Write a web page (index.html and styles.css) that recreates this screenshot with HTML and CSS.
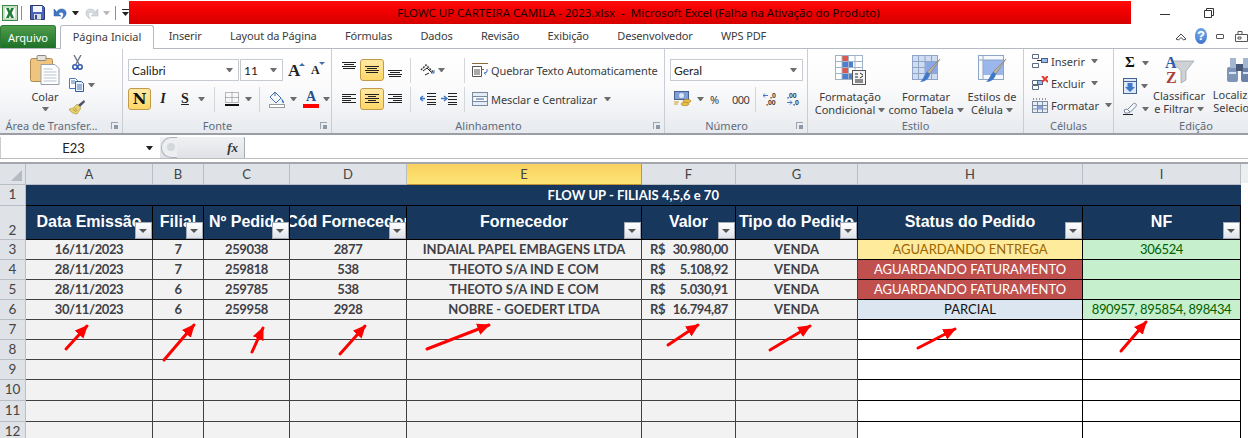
FILE: index.html
```html
<!DOCTYPE html>
<html lang="pt-BR">
<head>
<meta charset="utf-8">
<title>FLOWC UP CARTEIRA CAMILA - 2023.xlsx - Microsoft Excel</title>
<link rel="stylesheet" href="styles.css">
</head>
<body>
<div class="app">
  <header class="titlebar">
    <div class="qat">
      <svg class="q-excel" width="16" height="16" viewBox="0 0 16 16"><rect x=".5" y=".5" width="15" height="15" fill="#e8f3e4" stroke="#3d8a45"/><rect x="2" y="2" width="12" height="12" fill="#fff" stroke="#9cc79e"/><path d="M4 3h3l1 3 1-3h3L9.600 8 12 13H9L8 10l-1 3H4l2.400-5z" fill="#1f7a35"/></svg>
      <i class="q-sep"></i>
      <svg class="q-save" width="15" height="15" viewBox="0 0 15 15"><path d="M.5.500h12l2 2v12H.5z" fill="#4a63b8" stroke="#27386f"/><rect x="3" y="1" width="9" height="6" fill="#f2f5fb"/><rect x="4" y="9" width="7" height="5.500" fill="#d6dcea"/><rect x="5" y="10" width="2" height="4" fill="#35477f"/></svg>
      <svg class="q-undo" width="15" height="15" viewBox="0 0 15 15"><path d="M3 8.500C4 3 12 2.500 13 7c.6 3-1.500 5.500-4.500 7 2-2.500 2.500-4.500 1.500-6C9 6.500 6.500 7 5.500 9L8 11H1V4l2 2z" fill="#3f78c8" stroke="#2c5a9e" stroke-width=".5"/></svg>
      <i class="dd dd-black q-dd1"></i>
      <svg class="q-redo" width="15" height="15" viewBox="0 0 15 15"><path d="M12 8.500C11 3 3 2.500 2 7c-.6 3 1.500 5.500 4.500 7-2-2.500-2.500-4.500-1.500-6 1-1.500 3.500-1 4.500 1L7 11h7V4l-2 2z" fill="#d5dbe0" stroke="#aeb6bc" stroke-width=".5"/></svg>
      <i class="dd dd-pale q-dd2"></i>
      <i class="q-sep q-sep2"></i>
      <svg class="q-custom" width="7" height="8" viewBox="0 0 7 8"><path d="M0 .5h7" stroke="#222"/><path d="M0 3h7L3.500 7z" fill="#222"/></svg>
    </div>
    <div class="banner">FLOWC UP CARTEIRA CAMILA - 2023.xlsx &nbsp;-&nbsp; Microsoft Excel (Falha na Ativação do Produto)</div>
    <div class="winctl">
      <i class="win-min"></i>
      <svg class="win-restore" width="10" height="10" viewBox="0 0 10 10"><path d="M2.500 2.500V.5h7v7h-2M.5 2.500h7v7h-7z" fill="none" stroke="#333"/></svg>
    </div>
  </header>

  <nav class="tabs">
    <span class="tab-file">Arquivo</span>
    <span class="tab-active">Página Inicial</span>
    <span class="tab">Inserir</span>
    <span class="tab">Layout da Página</span>
    <span class="tab">Fórmulas</span>
    <span class="tab">Dados</span>
    <span class="tab">Revisão</span>
    <span class="tab">Exibição</span>
    <span class="tab">Desenvolvedor</span>
    <span class="tab">WPS PDF</span>
    <div class="tab-tools">
      <svg width="12" height="9" viewBox="0 0 12 9"><path d="M1 7l5-5 5 5-2.500 1L6 5.500 3.500 8z" fill="#fff" stroke="#444"/></svg>
      <span class="help">?</span>
      <i class="mini-min"></i>
      <svg class="mini-lock" width="13" height="12" viewBox="0 0 13 12"><path d="M3 4V1.500h4V4M.5 4.500h12v7H.5zM3 7h3v2H3z" fill="none" stroke="#555"/></svg>
    </div>
  </nav>

  <section class="ribbon">
    <div class="group g-clip">
      <div class="g-body clip-body">
        <div class="big paste">
          <svg width="30" height="30" viewBox="0 0 30 30"><rect x=".5" y="3.500" width="22" height="23" rx="2" fill="#eec47f" stroke="#b38a4e"/><rect x="7" y=".5" width="9" height="5" rx="1" fill="#e6e3dc" stroke="#8b8a84"/><path d="M11 9.500h14l4 4v16H11z" fill="#fff" stroke="#96a0ae"/><path d="M13.500 14h9M13.500 17h13M13.500 20h13M13.500 23h13M13.500 26h13" stroke="#b9c3d0"/></svg>
          <span class="big-label">Colar</span>
          <i class="dd"></i>
        </div>
        <div class="clip-tools">
          <svg class="t-cut" width="11" height="15" viewBox="0 0 11 15"><path d="M2 0l5 9M9 0L4 9" stroke="#6b7686" stroke-width="1.400"/><circle cx="3" cy="12" r="2.200" fill="none" stroke="#2d55a8" stroke-width="1.500"/><circle cx="8" cy="12" r="2.200" fill="none" stroke="#2d55a8" stroke-width="1.500"/></svg>
          <div class="t-copy"><svg width="15" height="14" viewBox="0 0 15 14"><path d="M.5.500h6l2 2v8H.5z" fill="#fff" stroke="#4c7ab8"/><path d="M6.500 3.500h6l2 2v8h-8z" fill="#e8f0fb" stroke="#2f5ea3"/><path d="M8 7h5M8 9h5M8 11h5M2 3h4M2 5h4" stroke="#4c7ab8"/></svg><i class="dd"></i></div>
          <svg class="t-paint" width="16" height="15" viewBox="0 0 16 15"><path d="M15 0l1 2-5 5-2-2z" fill="#4d5361"/><path d="M8 4l4 4-4 6c-3 0-7-2-8-5 3 0 6-2 8-5z" fill="#e8cf6e" stroke="#a8923e" stroke-width=".6"/><path d="M4 9l3 3M6 8l2 3" stroke="#b59c45"/></svg>
        </div>
      </div>
      <div class="g-label lab-launch">Área de Transfer...<i class="launch"></i></div>
    </div>

    <div class="group g-font">
      <div class="g-body rows">
        <div class="row">
          <div class="combo c-font"><span>Calibri</span><i class="dd"></i></div>
          <div class="combo c-size"><span>11</span><i class="dd"></i></div>
          <span class="glyph-a grow">A<i class="up"></i></span>
          <span class="glyph-a shrink">A<i class="down"></i></span>
        </div>
        <div class="row">
          <span class="hot fbtn b-n">N</span>
          <span class="fchar fi">I</span>
          <span class="fchar fs">S</span>
          <i class="dd m7"></i>
          <i class="vsep m9"></i>
          <svg class="m10" width="14" height="14" viewBox="0 0 14 14"><path d="M.5.500h13v10H.5zM7 .5v10M.5 5.500h13" fill="none" stroke="#777" stroke-dasharray="1 1"/><path d="M0 13h14" stroke="#111" stroke-width="2"/></svg>
          <i class="dd m6"></i>
          <i class="vsep m7"></i>
          <svg class="m9" width="16" height="17" viewBox="0 0 16 17"><path d="M6 1l6 6-5 5-6-6z" fill="#f5f8fc" stroke="#3f6fae"/><path d="M12 7c2 2 3 3 3 4.500S13 12 13 10.500z" fill="#3f78c8"/><path d="M6 5V1" stroke="#3f6fae"/><rect x=".5" y="13.500" width="15" height="3" fill="#fff" stroke="#9a9a9a"/></svg>
          <i class="dd m5"></i>
          <span class="fcolor m6">A</span>
          <i class="dd m4"></i>
        </div>
      </div>
      <div class="g-label lab-launch">Fonte<i class="launch"></i></div>
    </div>

    <div class="group g-align">
      <div class="g-body rows">
        <div class="row">
          <svg class="al" width="14" height="22" viewBox="0 0 14 22"><path d="M0 3.500h14M2 5.500h10M0 7.500h14M1 9.500h12" stroke="#222"/></svg>
          <span class="hot abtn"><svg width="14" height="10" viewBox="0 0 14 10"><path d="M0 1.500h14M2 3.500h10M0 5.500h14M1 7.500h12" stroke="#222"/></svg></span>
          <svg class="al" width="14" height="22" viewBox="0 0 14 22"><path d="M0 11.500h14M2 13.500h10M0 15.500h14M1 17.500h12" stroke="#222"/></svg>
          <i class="vsep m8"></i>
          <svg class="m9" width="16" height="13" viewBox="0 0 16 13"><path d="M1 6l5-5 8 8" fill="none" stroke="#444" stroke-width="1.500" stroke-dasharray="2 1"/><path d="M3 7l4-3 5 5M5 11l4-2" fill="none" stroke="#222"/><path d="M11 9l3 0 0-3" fill="none" stroke="#3f78c8"/></svg>
          <i class="dd m2"></i>
          <i class="vsep m19"></i>
          <svg class="m7" width="16" height="14" viewBox="0 0 16 14"><path d="M0 .5h16M0 3.500h10M0 6.500h12" stroke="#8a6a3a"/><path d="M.5 3.500h9v10h-9zM2 7h6M2 9h6M2 11h6" fill="#fff" stroke="#555"/><path d="M12 10l3-1V6M12 10l2 1.500" fill="none" stroke="#3f78c8"/></svg>
          <span class="rtext m3">Quebrar Texto Automaticamente</span>
        </div>
        <div class="row">
          <svg class="al" width="14" height="22" viewBox="0 0 14 22"><path d="M0 6.500h14M0 8.500h9M0 10.500h14M0 12.500h9M0 14.500h14" stroke="#222"/></svg>
          <span class="hot abtn"><svg width="14" height="12" viewBox="0 0 14 12"><path d="M0 1.500h14M3 3.500h8M0 5.500h14M3 7.500h8M0 9.500h14" stroke="#222"/></svg></span>
          <svg class="al" width="14" height="22" viewBox="0 0 14 22"><path d="M0 6.500h14M5 8.500h9M0 10.500h14M5 12.500h9M0 14.500h14" stroke="#222"/></svg>
          <i class="vsep m8"></i>
          <svg class="m9" width="16" height="12" viewBox="0 0 16 12"><path d="M7 .5h9M7 3.500h9M7 6.500h9M7 9.500h9M7 11.500h9" stroke="#222"/><path d="M0 5.500h5M3 3l-3 2.500L3 8" fill="none" stroke="#3f78c8" stroke-width="1.400"/></svg>
          <svg class="m5" width="16" height="12" viewBox="0 0 16 12"><path d="M7 .5h9M7 3.500h9M7 6.500h9M7 9.500h9M7 11.500h9" stroke="#222"/><path d="M0 5.500h5M3 3l3 2.500L3 8" fill="none" stroke="#3f78c8" stroke-width="1.400"/></svg>
          <i class="vsep m7"></i>
          <svg class="m7" width="16" height="14" viewBox="0 0 16 14"><rect x=".5" y=".5" width="15" height="13" fill="#e4ecf7" stroke="#7a8aa0"/><path d="M.5 4.500h15M.5 9.500h15" stroke="#7a8aa0"/><rect x="2" y="5" width="12" height="4" fill="#fff"/><path d="M4 7h8" stroke="#2d55a8"/></svg>
          <span class="rtext m3">Mesclar e Centralizar</span>
          <i class="dd m7"></i>
        </div>
      </div>
      <div class="g-label lab-launch">Alinhamento<i class="launch"></i></div>
    </div>

    <div class="group g-num">
      <div class="g-body rows">
        <div class="row">
          <div class="combo c-num"><span>Geral</span><i class="dd"></i></div>
        </div>
        <div class="row">
          <svg class="m4" width="19" height="16" viewBox="0 0 19 16"><rect x=".5" y=".5" width="14" height="8" fill="#7f9fd6" stroke="#46638f"/><circle cx="7.500" cy="4.500" r="2.500" fill="#dbe6f7"/><ellipse cx="13" cy="10" rx="4" ry="1.700" fill="#eabf45" stroke="#a8832a" stroke-width=".6"/><ellipse cx="11" cy="13" rx="4" ry="1.700" fill="#eabf45" stroke="#a8832a" stroke-width=".6"/><path d="M0 11h5M0 13h4" stroke="#c9a02f"/></svg>
          <i class="dd m4"></i>
          <span class="ntext n-pct m6">%</span>
          <span class="ntext n-thou m13">000</span>
          <i class="vsep m7"></i>
          <svg class="m7" width="16" height="14" viewBox="0 0 16 14"><text class="dec" x="7" y="6">,0</text><text class="dec" x="3" y="13">,00</text><path d="M0 3.500h5M2 1.500l-2 2 2 2" fill="none" stroke="#3f78c8"/></svg>
          <svg class="m6" width="16" height="14" viewBox="0 0 16 14"><text class="dec" x="2" y="6">,00</text><text class="dec" x="8" y="13">,0</text><path d="M2 10.500h5M5 8.500l2 2-2 2" fill="none" stroke="#3f78c8"/></svg>
        </div>
      </div>
      <div class="g-label lab-launch">Número<i class="launch"></i></div>
    </div>

    <div class="group g-style">
      <div class="g-body style-body">
        <div class="big b-cond">
          <svg width="31" height="30" viewBox="0 0 31 30"><rect x=".5" y=".5" width="27" height="24" fill="#fff" stroke="#9fb2c8"/><rect x="7" y="1" width="6" height="6" fill="#e2574c"/><rect x="7" y="7" width="11" height="6" fill="#4c7fd0"/><rect x="7" y="13" width="6" height="6" fill="#e2574c"/><rect x="7" y="19" width="10" height="5" fill="#4c7fd0"/><path d="M7 .5v24M13.500 .5v24M20 .5v24M.5 6.500h27M.5 12.500h27M.5 18.500h27" stroke="#9fb2c8" fill="none"/><rect x="17.500" y="15.500" width="13" height="14" fill="#f4f4f4" stroke="#555"/><path d="M20 19h3M25 18l3 2M20 22h3M25 23l3-2M20 25h8M20 27h8" stroke="#222"/></svg>
          <span class="big-label l1">Formatação</span>
          <span class="big-label">Condicional<i class="dd m3 inl"></i></span>
        </div>
        <div class="big b-table">
          <svg width="29" height="30" viewBox="0 0 29 30"><rect x=".5" y=".5" width="25" height="24" fill="#cfdcf2" stroke="#8ea5c5"/><path d="M.5 6.500h25M.5 12.500h25M.5 18.500h25M6.500 .5v24M13 .5v24M19.500 .5v24" stroke="#8ea5c5"/><path d="M13 7h12v11H13z" fill="#8aa9e6"/><path d="M28 4L18 19l-3-2z" fill="#b9b2a4" stroke="#75705f" stroke-width=".5"/><path d="M15 17l3 2c-1 5-5 8-10 8 3-2 4-7 7-10z" fill="#3f78c8"/></svg>
          <span class="big-label l1">Formatar</span>
          <span class="big-label">como Tabela<i class="dd m3 inl"></i></span>
        </div>
        <div class="big b-cell">
          <svg width="29" height="30" viewBox="0 0 29 30"><rect x=".5" y=".5" width="25" height="24" fill="#f5f8fc" stroke="#8ea5c5"/><rect x="5" y="5" width="20" height="15" fill="#9bb6ec"/><path d="M.5 5h25M5 .5v24" stroke="#8ea5c5"/><path d="M28 4L18 19l-3-2z" fill="#b9b2a4" stroke="#75705f" stroke-width=".5"/><path d="M15 17l3 2c-1 5-5 8-10 8 3-2 4-7 7-10z" fill="#3f78c8"/></svg>
          <span class="big-label l1">Estilos de</span>
          <span class="big-label">Célula<i class="dd m3 inl"></i></span>
        </div>
      </div>
      <div class="g-label">Estilo</div>
    </div>

    <div class="group g-cells">
      <div class="g-body cells-body">
        <div class="cell-row"><svg width="16" height="14" viewBox="0 0 16 14"><path d="M.5.500h6v4h-6zM.5 9.500h6v4h-6z" fill="#fff" stroke="#5c6b80"/><rect x="9.500" y="4.500" width="6" height="4" fill="#9bbbe8" stroke="#46638f"/><path d="M5 6.500h4" stroke="#222"/></svg><span class="rtext m3">Inserir</span><i class="dd m6"></i></div>
        <div class="cell-row"><svg width="16" height="14" viewBox="0 0 16 14"><path d="M.5 4.500h6v4h-6zM.5 9.500h6v4h-6z" fill="#fff" stroke="#5c6b80"/><rect x="5.500" y="4.500" width="5" height="4" fill="#9bbbe8" stroke="#46638f"/><path d="M10 0l6 6M16 0l-6 6" stroke="#e2402f" stroke-width="2"/></svg><span class="rtext m3">Excluir</span><i class="dd m6"></i></div>
        <div class="cell-row"><svg width="16" height="15" viewBox="0 0 16 15"><rect x=".5" y="3.500" width="15" height="11" fill="#e8eef8" stroke="#7a8aa0"/><path d="M5.500 3.500v11M10.500 3.500v11M.5 7.500h15M.5 11h15" stroke="#7a8aa0"/><rect x="6" y="8" width="4" height="3" fill="#7fa5e2"/><path d="M1 1h1M4 1h1M7 1h1M10 1h1M13 1h1" stroke="#333"/></svg><span class="rtext m3">Formatar</span><i class="dd m6"></i></div>
      </div>
      <div class="g-label">Células</div>
    </div>

    <div class="group g-edit">
      <div class="g-body edit-body">
        <div class="edit-small">
          <div class="edit-row"><span class="sigma">Σ</span><i class="dd m5"></i></div>
          <div class="edit-row"><svg width="14" height="16" viewBox="0 0 14 16"><rect x=".5" y=".5" width="13" height="15" fill="#dfe9f8" stroke="#46638f"/><path d="M.5 3.500h13" stroke="#46638f"/><path d="M4.500 5h5v4H12l-5 5-5-5h2.500z" fill="#3f78c8"/></svg><i class="dd m4"></i></div>
          <div class="edit-row"><svg width="14" height="13" viewBox="0 0 14 13"><path d="M4 8l6-6c1-1 2-1 3 0s0 2-.5 3L7 10.500H4z" fill="#f1f4f8" stroke="#7a8aa0"/><path d="M1 8l3-1 3 3-2 1H2z" fill="#fff" stroke="#7a8aa0"/><path d="M0 12.500h10" stroke="#222"/></svg><i class="dd m5"></i></div>
        </div>
        <div class="big b-sort">
          <svg class="sort-ic" width="30" height="29" viewBox="0 0 30 29"><path d="M8 6h22l-8 10v9l-5 3V16z" fill="#cfd2d4" stroke="#8e9296" stroke-width=".6"/><text class="az az-a" x="1" y="13">A</text><text class="az az-z" x="2" y="28">Z</text></svg>
          <span class="big-label l1">Classificar</span>
          <span class="big-label">e Filtrar<i class="dd m3 inl"></i></span>
        </div>
        <div class="big b-find">
          <svg width="26" height="28" viewBox="0 0 26 28"><rect x="0" y="12" width="11" height="15" rx="2" fill="#7f95b8"/><rect x="14" y="12" width="11" height="15" rx="2" fill="#6a82a8"/><rect x="3" y="3" width="6" height="10" fill="#a4b6d0"/><rect x="16" y="3" width="6" height="10" fill="#a4b6d0"/><rect x="9" y="9" width="7" height="7" fill="#48597a"/><path d="M2 18h7M16 18h7" stroke="#dbe4f2" stroke-width="2"/></svg>
          <span class="big-label l1">Localizar e</span>
          <span class="big-label">Selecionar</span>
        </div>
      </div>
      <div class="g-label">Edição</div>
    </div>
  </section>

  <div class="formula">
    <div class="namebox"><span class="name">E23</span><i class="dd dd-black"></i></div>
    <div class="fx-area"><i class="pill"><b></b></i><span class="fx">fx</span></div>
    <div class="input"></div>
  </div>

  <div class="sheet">
    <table class="grid">
      <colgroup>
        <col class="w-h"><col class="w-a"><col class="w-b"><col class="w-c"><col class="w-d"><col class="w-e"><col class="w-f"><col class="w-g"><col class="w-i"><col class="w-j">
      </colgroup>
      <thead>
        <tr class="letters">
          <th class="corner"><i></i></th>
          <th>A</th><th>B</th><th>C</th><th>D</th><th class="sel">E</th><th>F</th><th>G</th><th>H</th><th>I</th>
        </tr>
      </thead>
      <tbody>
        <tr class="r-title"><th class="rn">1</th><td colspan="9" class="title">FLOW UP - FILIAIS 4,5,6 e 70</td></tr>
        <tr class="r-head">
          <th class="rn rn-low">2</th>
          <td class="hd"><div class="hd-in"><span>Data Emissão</span></div><i class="filter"></i></td>
          <td class="hd"><div class="hd-in"><span>Filial</span></div><i class="filter"></i></td>
          <td class="hd"><div class="hd-in"><span>Nº Pedido</span></div><i class="filter"></i></td>
          <td class="hd"><div class="hd-in"><span>Cód Fornecedor</span></div><i class="filter"></i></td>
          <td class="hd"><div class="hd-in"><span>Fornecedor</span></div><i class="filter"></i></td>
          <td class="hd"><div class="hd-in"><span>Valor</span></div><i class="filter"></i></td>
          <td class="hd"><div class="hd-in"><span>Tipo do Pedido</span></div><i class="filter"></i></td>
          <td class="hd"><div class="hd-in"><span>Status do Pedido</span></div><i class="filter"></i></td>
          <td class="hd"><div class="hd-in"><span>NF</span></div><i class="filter"></i></td>
        </tr>
        <tr>
          <th class="rn">3</th><td class="d num">16/11/2023</td><td class="d num">7</td><td class="d num">259038</td><td class="d num">2877</td><td class="d">INDAIAL PAPEL EMBAGENS LTDA</td>
          <td class="d num"><div class="money"><span>R$</span><span>30.980,00</span></div></td><td class="d">VENDA</td>
          <td class="st wait">AGUARDANDO ENTREGA</td><td class="st nf num">306524</td>
        </tr>
        <tr>
          <th class="rn">4</th><td class="d num">28/11/2023</td><td class="d num">7</td><td class="d num">259818</td><td class="d num">538</td><td class="d">THEOTO S/A IND E COM</td>
          <td class="d num"><div class="money"><span>R$</span><span>5.108,92</span></div></td><td class="d">VENDA</td>
          <td class="st bill">AGUARDANDO FATURAMENTO</td><td class="st nf"></td>
        </tr>
        <tr>
          <th class="rn">5</th><td class="d num">28/11/2023</td><td class="d num">6</td><td class="d num">259785</td><td class="d num">538</td><td class="d">THEOTO S/A IND E COM</td>
          <td class="d num"><div class="money"><span>R$</span><span>5.030,91</span></div></td><td class="d">VENDA</td>
          <td class="st bill">AGUARDANDO FATURAMENTO</td><td class="st nf"></td>
        </tr>
        <tr>
          <th class="rn">6</th><td class="d num">30/11/2023</td><td class="d num">6</td><td class="d num">259958</td><td class="d num">2928</td><td class="d">NOBRE - GOEDERT LTDA</td>
          <td class="d num"><div class="money"><span>R$</span><span>16.794,87</span></div></td><td class="d">VENDA</td>
          <td class="st part">PARCIAL</td><td class="st nf num">890957, 895854, 898434</td>
        </tr>
        <tr><th class="rn">7</th><td class="d"></td><td class="d"></td><td class="d"></td><td class="d"></td><td class="d"></td><td class="d"></td><td class="d"></td><td class="e"></td><td class="e"></td></tr>
        <tr><th class="rn">8</th><td class="d"></td><td class="d"></td><td class="d"></td><td class="d"></td><td class="d"></td><td class="d"></td><td class="d"></td><td class="e"></td><td class="e"></td></tr>
        <tr><th class="rn">9</th><td class="d"></td><td class="d"></td><td class="d"></td><td class="d"></td><td class="d"></td><td class="d"></td><td class="d"></td><td class="e"></td><td class="e"></td></tr>
        <tr class="r-tall"><th class="rn">10</th><td class="d"></td><td class="d"></td><td class="d"></td><td class="d"></td><td class="d"></td><td class="d"></td><td class="d"></td><td class="e"></td><td class="e"></td></tr>
        <tr class="r-tall"><th class="rn">11</th><td class="d"></td><td class="d"></td><td class="d"></td><td class="d"></td><td class="d"></td><td class="d"></td><td class="d"></td><td class="e"></td><td class="e"></td></tr>
        <tr class="r-tall"><th class="rn">12</th><td class="d"></td><td class="d"></td><td class="d"></td><td class="d"></td><td class="d"></td><td class="d"></td><td class="d"></td><td class="e"></td><td class="e"></td></tr>
      </tbody>
    </table>
  </div>

  <svg class="arrows" width="1248" height="438" viewBox="0 0 1248 438">
    <defs>
      <marker id="head" viewBox="0 0 10 10" refX="9" refY="5" markerUnits="userSpaceOnUse" markerWidth="13" markerHeight="13" orient="auto"><path d="M0 .5L10 5 0 9.500z" fill="#f00"/></marker>
    </defs>
    <g class="arrow-lines">
      <path d="M66 349L87 326" marker-end="url(#head)"/>
      <path d="M164 360L194 325" marker-end="url(#head)"/>
      <path d="M252 352L263 328" marker-end="url(#head)"/>
      <path d="M340 354L365 326" marker-end="url(#head)"/>
      <path d="M427 349L489 325" marker-end="url(#head)"/>
      <path d="M668 345L698 325" marker-end="url(#head)"/>
      <path d="M770 350L810 326" marker-end="url(#head)"/>
      <path d="M918 348L955 329" marker-end="url(#head)"/>
      <path d="M1121 351L1146 322" marker-end="url(#head)"/>
    </g>
  </svg>
</div>
</body>
</html>
```

FILE: styles.css
```css
* { box-sizing: border-box; }
html, body { margin: 0; height: 438px; overflow: hidden; background: #fff; }
i { display: block; font-style: normal; }
svg { display: block; flex-shrink: 0; }
.app { position: relative; width: 1248px; height: 438px; overflow: hidden; font-family: "Noto Sans", sans-serif; font-size: 11px; color: #3c3c3c; }

/* title bar */
.titlebar { display: flex; height: 24px; padding-top: 1px; }
.qat { width: 129px; display: flex; align-items: center; padding-left: 2px; flex-shrink: 0; }
.q-sep { width: 1px; height: 14px; background: #8e8e8e; margin-left: 3px; }
.q-save { margin-left: 8px; }
.q-undo { margin-left: 8px; }
.q-dd1 { margin-left: 4px; }
.q-redo { margin-left: 5px; }
.q-dd2 { margin-left: 4px; }
.q-sep2 { margin-left: 5px; }
.q-custom { margin-left: 7px; }
.banner { width: 1002px; height: 23px; padding-left: 17px; background: linear-gradient(#ff0c0c, #f00000 45%, #d60000); color: #1c0202; font-size: 11.500px; line-height: 23px; text-align: center; white-space: nowrap; flex-shrink: 0; }
.winctl { display: flex; align-items: center; flex: 1; }
.win-min { width: 10px; height: 1px; background: #333; margin-left: 29px; margin-top: 4px; }
.win-restore { margin-left: 34px; }

/* tabs */
.tabs { display: flex; height: 24px; align-items: flex-end; position: relative; }
.tab-file { width: 56px; height: 23px; background: linear-gradient(#4f9c4b, #1f7028); color: #fff; text-align: center; line-height: 23px; border-radius: 3px 3px 0 0; border: 1px solid #2d7a33; border-bottom: 0; margin-right: 4px; }
.tab-active { width: 94px; height: 24px; border: 1px solid #b5bac2; border-bottom: 0; border-radius: 3px 3px 0 0; text-align: center; line-height: 22px; background: #fff; position: relative; z-index: 1; margin-bottom: -1px; padding-bottom: 1px; }
.tab { padding: 0 14.200px; line-height: 24px; white-space: nowrap; letter-spacing: -.15px; }
.tab-active + .tab { margin-left: .500px; }
.tab-tools { margin-left: auto; width: 73px; flex-shrink: 0; align-self: center; display: flex; align-items: center; }
.help { width: 16px; height: 16px; margin-left: 8px; border-radius: 50%; background: radial-gradient(circle at 50% 30%, #7fb0ee, #2f6bc0); color: #fff; text-align: center; font: 700 13px/16px "Liberation Sans", sans-serif; }
.mini-min { width: 10px; height: 5px; margin-left: 9px; border: 1px solid #555; border-radius: 1px; }
.mini-lock { margin-left: 11px; }

/* ribbon */
.ribbon { display: flex; height: 87px; border-top: 1px solid #b5bac2; border-bottom: 2px solid #9b9fa5; background: linear-gradient(#fff, #fbfbfc 45%, #e7eaee); overflow: hidden; }
.group { display: flex; flex-direction: column; border-right: 1px solid #c9ced6; flex-shrink: 0; height: 85px; }
.g-clip { width: 123px; }
.g-font { width: 209px; }
.g-align { width: 333px; }
.g-num { width: 143px; }
.g-style { width: 216px; }
.g-cells { width: 90px; }
.g-edit { width: 164px; border-right: 0; }
.g-body { height: 69px; flex-shrink: 0; }
.g-label { position: relative; text-align: center; color: #5f6b7c; line-height: 15px; height: 15px; white-space: nowrap; }
.lab-launch { padding-right: 19px; }
.launch { position: absolute; right: 4px; top: 4px; width: 7px; height: 7px; border: 1px solid #9aa3af; border-width: 1px 0 0 1px; }
.launch::after { content: ""; position: absolute; right: 0; bottom: 0; width: 4px; height: 4px; background: #8d97a5; }

.rows { padding: 10px 0 0 5px; display: flex; flex-direction: column; gap: 7px; }
.g-align .rows { padding-left: 10px; }
.row { display: flex; align-items: center; height: 22px; }
.big { display: flex; flex-direction: column; align-items: center; flex-shrink: 0; white-space: nowrap; padding-top: 6px; }
.big-label { line-height: 13px; display: flex; align-items: center; color: #3c3c3c; }
.l1 { margin-top: 5px; }

.dd { width: 7px; height: 4px; flex-shrink: 0; border-top: 4px solid #6d6d6d; border-left: 3.500px solid transparent; border-right: 3.500px solid transparent; }
.dd-black { border-top-color: #222; }
.dd-pale { border-top-color: #b9b9b9; }
.inl { margin-top: 1px; }
.m2 { margin-left: 2px; } .m3 { margin-left: 3px; } .m4 { margin-left: 4px; } .m5 { margin-left: 5px; } .m6 { margin-left: 6px; } .m7 { margin-left: 7px; } .m8 { margin-left: 8px; } .m9 { margin-left: 9px; } .m10 { margin-left: 10px; } .m13 { margin-left: 13px; } .m19 { margin-left: 19px; }
.vsep { width: 1px; height: 25px; background: #d3d7dc; flex-shrink: 0; }
.hot { background: linear-gradient(#ffe9a4, #ffd767); border: 1px solid #c29a4a; border-radius: 3px; display: flex; align-items: center; justify-content: center; height: 22px; flex-shrink: 0; }

.clip-body { display: flex; }
.paste { width: 36px; margin-left: 27px; }
.paste .big-label { margin-top: 5px; margin-bottom: 4px; }
.clip-tools { margin-left: 6px; padding-top: 6px; display: flex; flex-direction: column; }
.t-cut { margin-left: 3px; }
.t-copy { display: flex; align-items: center; gap: 4px; margin-top: 8px; }
.t-paint { margin-top: 8px; }

.combo { display: flex; align-items: center; justify-content: space-between; height: 22px; background: #fff; border: 1px solid #c6cbd2; padding: 0 5px 0 3px; color: #222; font: 12px "Lato", sans-serif; flex-shrink: 0; }
.c-font { width: 111px; }
.c-size { width: 43px; margin-left: 1px; }
.c-num { width: 133px; }
.glyph-a { position: relative; font-family: "Liberation Serif", serif; font-weight: 700; color: #222; line-height: 1; }
.grow { font-size: 17px; margin-left: 5px; width: 23px; }
.shrink { font-size: 12px; width: 14px; }
.up, .down { position: absolute; top: 0; right: 3px; border-left: 3px solid transparent; border-right: 3px solid transparent; }
.up { border-bottom: 3px solid #3f6fae; right: 6px; top: 1px; }
.down { border-top: 3px solid #3f6fae; right: 0; top: -2px; }
.b-n { width: 23px; font: 700 15px "DejaVu Serif", serif; color: #111; }
.fchar { font-family: "Liberation Serif", serif; color: #222; font-weight: 700; font-size: 14px; width: 12px; text-align: center; }
.fi { margin-left: 6px; font-style: italic; }
.fs { margin-left: 10px; text-decoration: underline; }
.fcolor { width: 16px; text-align: center; font: 700 14px/14px "Liberation Serif", serif; color: #23508f; border-bottom: 4px solid #f00; height: 18px; }
.abtn { width: 24px; margin: 0 4px; }
.rtext { color: #3c3c3c; white-space: nowrap; letter-spacing: -.1px; }
.cell-row .rtext { letter-spacing: 0; }
.ntext { color: #3c3c3c; text-align: center; }
.n-pct { width: 9px; }
.n-thou { width: 16px; letter-spacing: -.5px; }
.dec { font: 700 7px "Liberation Sans", sans-serif; fill: #333; }

.style-body { display: flex; padding-left: 4px; }
.b-cond, .b-table { width: 76px; }
.b-cell { width: 56px; }
.cells-body { padding: 1px 0 0 8px; }
.cell-row { display: flex; align-items: center; height: 22px; }
.edit-body { display: flex; }
.edit-small { width: 35px; padding: 2px 0 0 9px; }
.edit-row { display: flex; align-items: center; height: 23px; }
.sigma { font: 700 15px "Liberation Serif", serif; color: #111; width: 14px; text-align: center; }
.b-sort { width: 60px; }
.b-find { width: 62px; }
.sort-ic { overflow: visible; }
.az { font: 700 16px "Liberation Serif", serif; }
.az-a { fill: #2e5aa8; }
.az-z { fill: #a8413a; }

/* formula bar */
.formula { display: flex; height: 24px; padding-top: 2px; border-bottom: 1px solid #bcbcbc; background: #fff; }
.namebox { width: 160px; display: flex; align-items: center; padding: 0 7px 0 0; border-left: 1px solid #ccc; }
.name { flex: 1; text-align: center; color: #222; font: 13px "Lato", sans-serif; }
.fx-area { width: 85px; display: flex; align-items: center; justify-content: flex-end; padding-right: 6px; background: linear-gradient(#f0f1f3, #dfe2e6); border-right: 1px solid #a8adb4; position: relative; }
.pill { position: absolute; left: 1px; top: 0; width: 16px; height: 21px; border-radius: 10px 0 0 10px; border: 1px solid #aeb2b8; border-right: 0; background: #eceef0; }
.pill b { display: block; width: 8px; height: 8px; margin: 5px 0 0 5px; border-radius: 50%; background: #d3d6da; }
.fx { font: italic 700 13px "Liberation Serif", serif; color: #333; }
.input { flex: 1; }

/* sheet */
.sheet { margin-top: 3px; border-top: 2px solid #a3a6ab; background: linear-gradient(#eceef0 19px, #fff 19px); }
.grid { table-layout: fixed; border-collapse: collapse; width: 1241px; margin-left: -1px; }
.w-h { width: 26px; } .w-a { width: 127px; } .w-b { width: 51px; } .w-c { width: 86px; } .w-d { width: 117px; } .w-e { width: 235px; } .w-f { width: 94px; } .w-g { width: 122px; } .w-i { width: 225px; } .w-j { width: 158px; }
.letters th { height: 19px; padding: 0; background: #dfe2e7; border: 1px solid #b9bdc4; border-top: 0; color: #444; font: 400 13px/18px "Lato", sans-serif; text-align: center; }
.letters .sel { background: linear-gradient(#f9d15f, #fee576); border: 1px solid #c2953a; border-top: 0; color: #444; }
.corner { position: relative; }
.corner i { position: absolute; right: 3px; bottom: 3px; border-left: 11px solid transparent; border-bottom: 11px solid #b6bac1; }
.rn { height: 20px; padding: 0; background: #dfe2e7; border: 1px solid #b9bdc4; color: #444; font: 400 13.500px/17px "Lato", sans-serif; text-align: center; }
.rn-low { vertical-align: bottom; }
tr { height: 20px; }
.r-title { height: 21px; }
.r-head { height: 34px; }
.r-tall { height: 21px; }
.title { background: #17375d; color: #fff; text-align: center; font: 700 13px/18px "Lato", sans-serif; padding: 0; border: 0; border-bottom: 1px solid #000; }
.hd { background: #17375d; border: 1px solid #000; padding: 0; position: relative; color: #fff; font: 700 16px "Liberation Sans", sans-serif; }
.hd-in { display: flex; justify-content: center; overflow: hidden; height: 32px; line-height: 32px; white-space: nowrap; }
.hd-in span { flex-shrink: 0; }
.filter { position: absolute; right: 0; bottom: 0; width: 17px; height: 17px; background: linear-gradient(#fff, #dfe3e9); border: 1px solid #a5abb5; }
.filter::after { content: ""; position: absolute; left: 3px; top: 6px; border-top: 4px solid #555; border-left: 4px solid transparent; border-right: 4px solid transparent; }
.d, .e, .st { padding: 0; text-align: center; font: 700 13px/18px "Lato", sans-serif; white-space: nowrap; overflow: hidden; }
.d { background: #f2f2f2; border: 1px solid #404040; color: #3f3f46; }
.e { background: #fff; border: 1px solid #000; }
.st { border: 1px solid #000; font-weight: 400; }
.num { letter-spacing: -.4px; }
.wait { background: #ffeb9c; color: #9c6500; }
.bill { background: #c0504d; color: #fff; }
.part { background: #dce6f1; color: #111; }
.nf { background: #c6efce; color: #006100; }
.money { display: flex; justify-content: space-between; padding: 0 7px 0 8px; }

/* red annotation arrows */
.arrows { position: absolute; left: 0; top: 0; pointer-events: none; }
.arrow-lines path { stroke: #f00; stroke-width: 3px; stroke-linecap: round; fill: none; }
```
